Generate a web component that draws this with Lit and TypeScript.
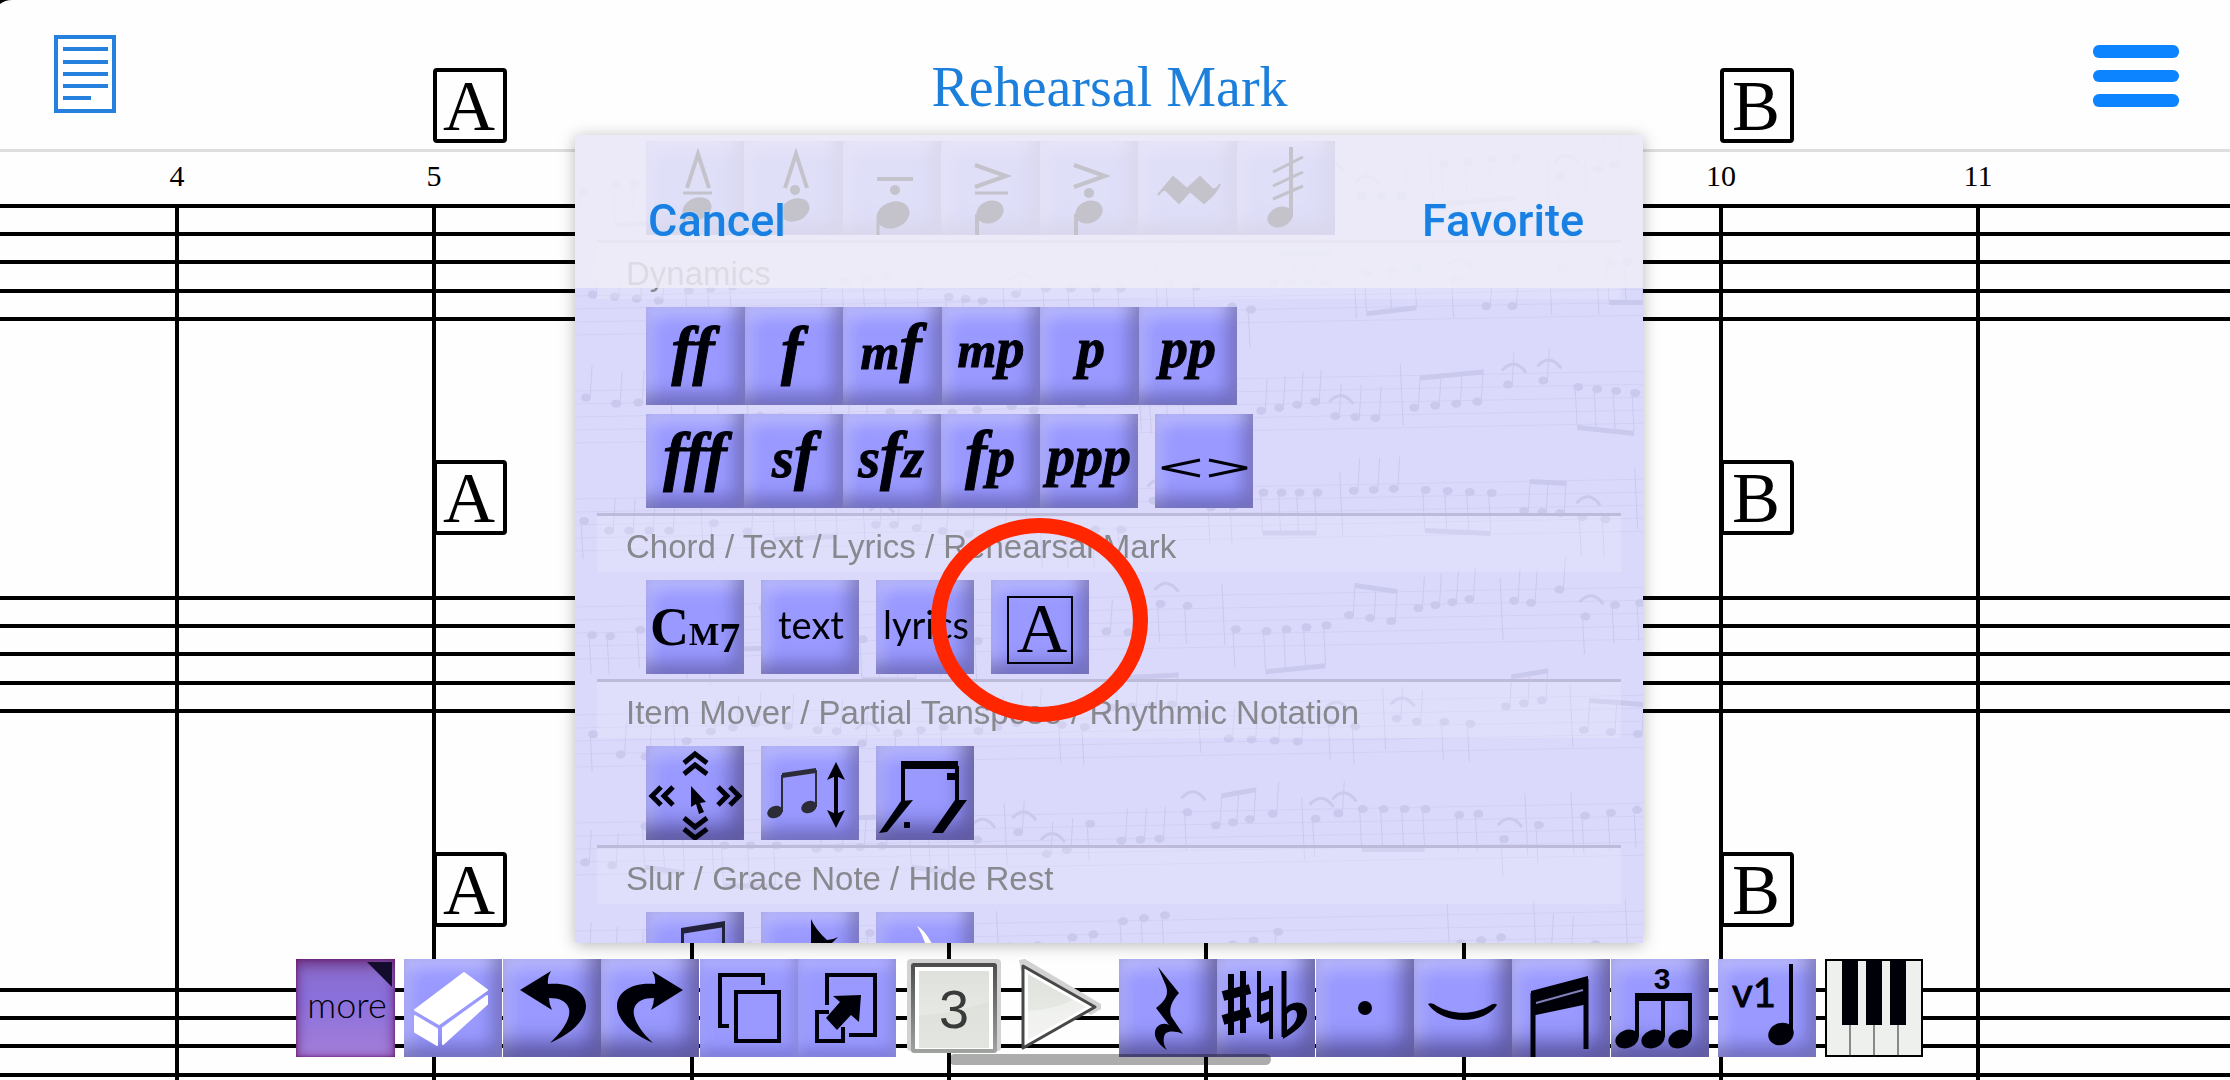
import { LitElement, html, svg, css } from "lit";
import { customElement } from "lit/decorators.js";

type Tile = { label: string; art: unknown; kind?: string };
type Row = { groups: Tile[][]; tall?: boolean };
type Section = { title?: string; rows: Row[] };

/* ---------- glyph helpers ---------- */
const dyn = (text: unknown, y = 60, x = 48) =>
  svg`<text class="dyn" x=${x} y=${y} text-anchor="middle">${text}</text>`;
const head = (x: number, y: number, rx: number, ry: number) =>
  svg`<ellipse cx=${x} cy=${y} rx=${rx} ry=${ry} transform="rotate(-22 ${x} ${y})"/>`;
const line = (d: string, w: number, cap = "butt") =>
  svg`<path d=${d} fill="none" stroke="#000008" stroke-width=${w} stroke-linecap=${cap}/>`;

const accents: Tile[] = [
  { label: "Marcato tenuto", art: svg`${line("M41 47L52 13L63 47", 4)}${line("M37 52H66", 3)}${head(51, 68, 15, 11)}${line("M38 71V98", 3)}` },
  { label: "Marcato staccato", art: svg`${line("M41 47L52 13L63 47", 4)}<circle cx="51" cy="49" r="5"/>${head(51, 69, 15, 11)}${line("M38 71V98", 3)}` },
  { label: "Portato", art: svg`${line("M34 38H70", 4)}<circle cx="52" cy="49" r="5"/>${head(50, 74, 17, 13)}${line("M35 78V98", 3)}` },
  { label: "Accent tenuto", art: svg`${line("M34 24L65 35L34 46", 4)}${line("M34 52H67", 3)}${head(49, 71, 14, 11)}${line("M36 73V98", 4)}` },
  { label: "Accent staccato", art: svg`${line("M34 24L65 35L34 46", 4)}<circle cx="49" cy="52" r="5"/>${head(49, 71, 14, 11)}${line("M36 73V98", 4)}` },
  { label: "Mordent", art: svg`<path d="M20 54L35 36L49 48L62 36L74 48Q78 50 82 43Q78 53 66 62L52 50L41 62L28 49Q24 48 20 54Z" stroke="#000008" stroke-width="2"/>` },
  { label: "Tremolo", art: svg`${line("M54 6V76", 4)}${head(43, 76, 13, 10)}${line("M36 31L66 16M36 45L66 31M36 58L66 45", 3)}` },
];

const dynamicsA: Tile[] = [
  { label: "ff", art: dyn("ff", 65, 47) },
  { label: "f", art: dyn("f", 65, 47) },
  { label: "mf", art: dyn(svg`<tspan class="dyn-m">m</tspan>f`, 62, 48) },
  { label: "mp", art: dyn(svg`<tspan class="dyn-m">m</tspan><tspan class="dyn-p">p</tspan>`, 60, 49) },
  { label: "p", art: dyn(svg`<tspan class="dyn-p">p</tspan>`, 60, 51) },
  { label: "pp", art: dyn(svg`<tspan class="dyn-p">pp</tspan>`, 60, 49) },
];
const dynamicsB: Tile[] = [
  { label: "fff", art: dyn("fff", 64, 49) },
  { label: "sf", art: dyn(svg`<tspan class="dyn-p">s</tspan>f`, 63, 50) },
  { label: "sfz", art: dyn(svg`<tspan class="dyn-p">s</tspan>f<tspan class="dyn-p">z</tspan>`, 63, 48) },
  { label: "fp", art: dyn(svg`f<tspan class="dyn-p">p</tspan>`, 62, 49) },
  { label: "ppp", art: dyn(svg`<tspan class="dyn-p">ppp</tspan>`, 61, 49) },
];
const hairpin: Tile = { label: "Crescendo and diminuendo", art: line("M45 46L7 54L45 62M54 46L92 54L54 62", 3) };

const sections: Section[] = [
  { rows: [{ groups: [accents] }] },
  { title: "Dynamics", rows: [{ groups: [dynamicsA], tall: true }, { groups: [dynamicsB, [hairpin]] }] },
  {
    title: "Chord / Text / Lyrics / Rehearsal Mark",
    rows: [{
      groups: [
        [{ label: "Chord", art: svg`<text class="chord" x="4" y="65">C<tspan class="chord-m">M</tspan><tspan class="chord-7" dy="7">7</tspan></text>` }],
        [{ label: "Text", art: svg`<text class="word" x="50" y="59" text-anchor="middle">text</text>` }],
        [{ label: "Lyrics", art: svg`<text class="word" x="50" y="59" text-anchor="middle">lyrics</text>` }],
        [{ label: "Rehearsal mark", art: svg`<rect x="17" y="17" width="64" height="66" fill="none" stroke="#000008" stroke-width="2"/><text class="boxed" x="51" y="72" text-anchor="middle">A</text>` }],
      ],
    }],
  },
  {
    title: "Item Mover / Partial Tanspose / Rhythmic Notation",
    rows: [{
      groups: [
        [{
          label: "Item mover", kind: "deep",
          art: svg`${line("M38 17L49 8L61 17M38 28L49 19L61 28M38 72L49 81L61 72M38 83L49 92L61 83M15 41L6 50L15 59M27 41L18 50L27 59M72 41L81 50L72 59M84 41L93 50L84 59", 5)}<path d="M45 40L60 56L54 57L58 66L53 68L50 58L45 61Z"/>`,
        }],
        [{
          label: "Partial transpose",
          art: svg`<g fill="#2c2c38">${head(14, 66, 8, 6)}${head(48, 61, 8, 6)}<path d="M21 27L55 22V27L21 32Z"/><rect x="20" y="29" width="2" height="37"/><rect x="54" y="24" width="2" height="37"/></g>${line("M75 28V70", 4)}<path d="M75 16L84 34L75 30L66 34ZM75 82L84 64L75 68L66 64Z"/>`,
        }],
        [{
          label: "Rhythmic notation", kind: "deep",
          art: svg`<path d="M25 15H82V23H25Z"/>${line("M27 20V56M81 20V56", 4)}<path d="M71 27H81V34H71ZM25 55L37 54L11 86L3 87ZM79 54L91 54L67 87L56 87Z"/><rect x="28" y="76" width="6" height="6" rx="1"/>`,
        }],
      ],
    }],
  },
  {
    title: "Slur / Grace Note / Hide Rest",
    rows: [{
      groups: [
        [{ label: "Slur", kind: "deep", art: svg`<g fill="#22223a"><path d="M35 16L79 9V15L35 22Z"/><rect x="35" y="18" width="3" height="60"/><rect x="76" y="11" width="3" height="60"/></g>` }],
        [{ label: "Grace note", art: svg`<path d="M50 7Q54 17 66 28Q72 28 77 25L68 34V60H50Z"/>` }],
        [{ label: "Hide rest", art: svg`<path fill="#fff" d="M41 14Q50 18 60 40L52 44Q50 28 41 14Z"/>` }],
      ],
    }],
  },
];

/* ---------- toolbar artwork ---------- */
const undoPath = "M17 31L48 12Q44 18 45 25C70 23 83 34 83 47C83 60 70 74 47 84C61 71 68 58 66 50C64 42 56 39 46 39Q46 45 49 51Z";
const tool = (label: string, art: unknown, kind = ""): Tile => ({ label, art, kind });

const more = tool("more", svg`<path d="M71 3H96V28Z" fill="#140c2c"/><text class="more-word" x="51" y="59" text-anchor="middle">more</text>`, "more");
const editTools: Tile[][] = [
  [tool("Eraser", svg`<g fill="#fff" stroke="#fff" stroke-width="2" stroke-linejoin="round"><path d="M11 51L60 14L83 31L35 65Z"/><path d="M11 57L33 70V86L11 73Z"/><path d="M39 69L83 37V45L39 85Z"/></g>`)],
  [tool("Undo", svg`<path d=${undoPath}/>`, "deep"), tool("Redo", svg`<path transform="translate(99 0) scale(-1 1)" d=${undoPath}/>`, "deep")],
  [
    tool("Copy", line("M63 26V16H20V67H29M36 33H79V82H36Z", 4), "flat"),
    tool("Paste", svg`${line("M29 46V16H77V76H51M31 53H19V82H45V68", 4)}<path d="M63 36L61 63L53 56L39 71L28 59L42 43L35 37Z"/>`, "flat"),
  ],
];
const gray = svg`<linearGradient id="edge" x1="0" y1="0" x2="0" y2="1"><stop offset="0" stop-color="#4c4c4c"/><stop offset="1" stop-color="#a0a3a0"/></linearGradient>
  <linearGradient id="face" x1="0" y1="0" x2="0" y2="1"><stop offset="0" stop-color="#dfe1dc"/><stop offset="1" stop-color="#eceeea"/></linearGradient>`;
const count = tool("Voice 3", svg`${gray}
  <rect x="2" y="0" width="94" height="92" rx="4" fill="#d2d2d2"/>
  <rect x="6" y="4" width="86" height="90" rx="3" fill="url(#edge)"/>
  <rect x="10" y="8" width="78" height="82" fill="#fff"/>
  <rect x="14" y="12" width="70" height="77" fill="url(#face)"/>
  <path d="M14 57Q50 54 84 43V89H14Z" fill="#d9dcd7" opacity=".5"/>
  <text class="count" x="49" y="69" text-anchor="middle">3</text>`, "bare");
const play = tool("Play", svg`${gray}
  <path d="M7 1L13 0L89 45V50L79 56L9 12Z" fill="#d2d2d2"/>
  <path d="M11 7L83 48L11 89Z" fill="#fff" stroke="#484848" stroke-width="3" stroke-linejoin="round"/>
  <path d="M16 15L74 48L16 81Z" fill="url(#face)"/>
  <path d="M16 52Q44 50 61 41L74 48L16 81Z" fill="#fff" opacity=".4"/>`, "bare");
const noteTools: Tile[][] = [
  [
    tool("Rest", svg`<path d="M39 8L60 34C52 43 50 50 52 57L64 75C54 71 46 72 45 78C44 83 45 87 48 91C40 86 35 79 36 73C37 66 44 63 50 66L37 49C46 42 50 36 47 27Z"/>`, "deep"),
    tool("Accidentals", svg`${line("M14 15V76M26 12V74", 6)}${line("M6 37L33 30M6 61L33 53", 10)}${line("M42 12V63M54 27V80", 4)}${line("M42 39L54 35M42 61L54 56", 8)}${line("M67 12V78", 5)}<path fill-rule="evenodd" d="M66 52C74 40 91 41 90 54C90 64 78 73 66 80ZM70 55V71C76 67 80 62 80 56C80 49 74 50 70 55Z"/>`, "deep"),
  ],
  [
    tool("Dot", svg`<circle cx="49" cy="49" r="7"/>`, "deep"),
    tool("Tie", svg`<path d="M14 45Q18 43 23 47C38 56 60 56 75 47Q81 43 83 46C70 66 28 66 14 45Z"/>`, "deep"),
    tool("Beam", svg`<path d="M19 32L76 17V45L19 57Z"/>${line("M21 34V98M74 20V90", 5)}<path d="M24 44L71 31" stroke="#8080bc" stroke-width="2"/>`, "deep"),
  ],
  [
    tool("Tuplet", svg`<text class="tuplet" x="51" y="30" text-anchor="middle">3</text><path d="M24 34H81V42H24Z"/>${line("M26 36V78M52 36V78M79 36V78", 4)}${head(16, 80, 12, 9)}${head(42, 80, 12, 9)}${head(69, 80, 12, 9)}`, "deep"),
  ],
];
const voice = tool("v1", svg`<text class="voice" x="36" y="48" text-anchor="middle">v1</text>${head(63, 75, 13, 11)}${line("M73 5V76", 4)}`);
const piano = tool("Keyboard", svg`<rect x="1" y="1" width="96" height="96" fill="#eef0ee" stroke="#000" stroke-width="2"/>
  <path d="M17 0H33V66H17ZM41 0H57V66H41ZM65 0H81V66H65Z"/><path d="M25 66V98M49 66V98M73 66V98" stroke="#222" stroke-width="1"/>`, "bare");

/* ---------- score in the background ---------- */
const BARS = Array.from({ length: 8 }, (_, i) => Math.round(175 + i * 257.3));
const NUMBERED = [
  { bar: 0, n: 4 }, { bar: 1, n: 5 }, { bar: 6, n: 10 }, { bar: 7, n: 11 },
];
const SYSTEMS = [204, 596, 988];
const STAFF = [0, 28, 56, 85, 113];
const MARKS = [{ bar: 1, letter: "A" }, { bar: 6, letter: "B" }];

/* Faint handwritten staves that decorate the panel. */
function manuscript() {
  let seed = 11;
  const rnd = () => (seed = (seed * 16807) % 2147483647) / 2147483647;
  const parts: unknown[] = [];
  for (let s = 0; s < 8; s++) {
    const top = 30 + s * 108;
    for (let k = 0; k < 5; k++) {
      const y = top + k * 13;
      parts.push(svg`<path d="M0 ${y + 10}L1080 ${y - 10}" stroke="#8a86b8" stroke-width="1" opacity=".5"/>`);
    }
    let x = 8 + rnd() * 12;
    while (x < 1060) {
      const y = top + 8 - x / 54 + rnd() * 44;
      const up = rnd() > 0.6;
      const n = 1 + Math.floor(rnd() * 4);
      const step = 17 + Math.round(rnd() * 10);
      const slope = Math.round(rnd() * 8 - 4);
      const reach = up ? -32 : 38;
      const edge = up ? 4 : -3;
      for (let i = 0; i < n; i++) {
        const nx = x + i * step;
        const ny = y + i * slope;
        parts.push(svg`<ellipse cx=${nx} cy=${ny} rx="5" ry="4"/><path d="M${nx + edge} ${ny}l2 ${reach}" stroke="#8a86b8" stroke-width="1"/>`);
      }
      if (n > 2 && rnd() > 0.5) {
        const by = y + reach;
        parts.push(svg`<path d="M${x + edge + 2} ${by}l${(n - 1) * step} ${(n - 1) * slope}v5l${-(n - 1) * step} ${-(n - 1) * slope}z"/>`);
      } else if (rnd() > 0.7) {
        parts.push(svg`<path d="M${x - 6} ${y - 14}q12 -14 24 2" fill="none" stroke="#8a86b8" stroke-width="3"/>`);
      }
      x += n * step + 2 + rnd() * 12;
      if (rnd() > 0.75) {
        parts.push(svg`<path d="M${x} ${top - 2 - x / 54}l3 62" stroke="#8a86b8" stroke-width="1"/>`);
        x += 14;
      }
    }
  }
  return svg`${parts}`;
}
const MANUSCRIPT = manuscript();

@customElement("app-root")
export class AppRoot extends LitElement {
  static styles = css`
    :host { display: block; }
    * { box-sizing: border-box; }
    button { border: 0; margin: 0; padding: 0; background: none; font: inherit; color: inherit; cursor: pointer; }
    .stage {
      display: grid; grid-template: minmax(0, 1fr) / minmax(0, 1fr);
      height: 100vh; background: #fefefe; overflow: hidden; position: relative;
    }
    .score, .ui { grid-area: 1 / 1; }
    .score { width: 100%; height: 100%; display: block; }
    .score text { font-family: "Liberation Serif", serif; fill: #000; }
    .number { font-size: 30px; }
    .mark { font-size: 72px; }

    .ui { display: flex; flex-direction: column; align-items: center; padding-bottom: 23px; position: relative; }
    .top {
      align-self: stretch; flex: 0 0 135px; display: grid; grid-template-columns: 1fr auto 1fr;
      align-items: start; padding: 35px 51px 0 54px;
    }
    .title {
      margin: 20px 14px 0 0; font: 400 56px/64px "Liberation Serif", serif; color: #1c7fdc;
    }
    .page-button svg, .menu-button svg { display: block; }
    .page-button { justify-self: start; }
    .menu-button { justify-self: end; margin-top: 10px; }

    .panel-shadow {
      flex: 1 1 0; min-height: 0; display: flex; justify-content: center; align-self: stretch;
      padding-right: 12px;
      filter: drop-shadow(0 2px 8px rgba(0, 0, 0, 0.28));
    }
    .panel {
      flex: 0 1 1068px; min-width: 0; position: relative; overflow: hidden; background: #dad9fb;
    }
    .manuscript { position: absolute; inset: 0; width: 100%; height: 100%; fill: #8a86b8; opacity: 0.2; }
    .panel-bar {
      position: absolute; inset: 0 0 auto 0; height: 153px; padding: 60px 59px 0 73px;
      display: flex; justify-content: space-between; align-items: flex-start;
      background: rgba(239, 238, 246, 0.82);
    }
    .panel-bar button {
      font: 500 45px/52px Roboto, "Liberation Sans", sans-serif; color: #1a7fe2;
      text-shadow: 0 0 2px #bfeaff;
    }
    .list { height: 100%; overflow: hidden auto; scrollbar-width: none; padding: 6px 22px 0; position: relative; }
    .section-title {
      margin: 5px 0 8px; height: 59px; padding: 13px 29px 0; border-top: 3px solid #bdbbd9;
      background: rgba(255, 255, 255, 0.17); font: 400 33px/36px "Liberation Sans", sans-serif;
      color: #88888f; white-space: nowrap;
    }
    .row { display: flex; gap: 17px; padding-left: 49px; height: 94px; }
    .row.tall { height: 98px; margin-bottom: 9px; }
    .group { display: grid; grid-auto-flow: column; grid-auto-columns: 1fr; }

    .tile {
      display: block; overflow: hidden; min-width: 98px; height: 100%; background: #9999ff;
      box-shadow: inset -8px -10px 18px rgba(20, 10, 60, 0.36), inset 0 10px 16px rgba(205, 205, 255, 0.6),
        inset 9px 0 16px rgba(200, 200, 255, 0.35);
    }
    .tile.deep {
      box-shadow: inset -10px -14px 22px rgba(20, 10, 60, 0.5), inset 0 10px 18px rgba(205, 205, 255, 0.65),
        inset 9px 0 16px rgba(200, 200, 255, 0.35);
    }
    .tile.flat {
      box-shadow: inset -4px -8px 14px rgba(30, 20, 90, 0.24), inset 0 8px 16px rgba(205, 205, 255, 0.5);
    }
    .tile.bare { background: none; box-shadow: none; }
    .tile.more {
      min-width: 99px; background: linear-gradient(#8a6cc8, #8a70dc 40%, #a47ed8);
      box-shadow: inset 0 0 3px #6a1060, inset 0 6px 14px rgba(90, 20, 90, 0.6), inset 0 0 8px rgba(110, 20, 130, 0.45);
    }
    .tile svg { display: block; fill: #000008; }
    .dyn { font: italic 700 66px "Liberation Serif", serif; stroke: #000008; stroke-width: 1px; }
    .dyn-m { font-size: 50px; }
    .dyn-p { font-size: 56px; }
    .chord { font: 700 54px "Liberation Serif", serif; }
    .chord-m { font-size: 32px; }
    .chord-7 { font-size: 42px; }
    .word { font: 400 38px Lato, "Liberation Sans", sans-serif; }
    .boxed { font: 400 70px "Liberation Serif", serif; }
    .more-word { font: 300 36px Lato, "Liberation Sans", sans-serif; }
    .count { font: 400 54px "Liberation Sans", sans-serif; fill: #3a3a3a; }
    .tuplet { font: 700 30px "Liberation Sans", sans-serif; }
    .voice { font: 400 40px Lato, "Liberation Sans", sans-serif; stroke: #000008; stroke-width: 1px; }

    .tools { flex: 0 0 98px; margin: 16px 12px 0 0; display: flex; gap: 9px; }
    .cluster { display: flex; gap: 1px; }
    .pair { display: flex; }
    .indicator {
      position: absolute; left: 50%; bottom: 15px; width: 322px; height: 11px; margin-left: -166px;
      border-radius: 6px; background: rgba(0, 0, 0, 0.32);
    }
    .ring {
      position: absolute; left: 356px; top: 383px; width: 217px; height: 204px;
      border: 15px solid #ff2600; border-radius: 50%; pointer-events: none;
    }
  `;

  private tile(t: Tile) {
    return html`<button type="button" class="tile ${t.kind ?? ""}" aria-label=${t.label}>
      <svg width="98" height="98" viewBox="0 0 98 98" aria-hidden="true">${t.art}</svg>
    </button>`;
  }

  private group(tiles: Tile[]) {
    const width = Math.floor(tiles.length * 98.5);
    return html`<div class="group" style="width:${width}px">${tiles.map((t) => this.tile(t))}</div>`;
  }

  private section(s: Section) {
    return html`<section>
      ${s.title ? html`<h2 class="section-title">${s.title}</h2>` : ""}
      ${s.rows.map((r) => html`<div class="row ${r.tall ? "tall" : ""}">${r.groups.map((g) => this.group(g))}</div>`)}
    </section>`;
  }

  private score() {
    return html`<svg class="score" aria-label="Score">
      <rect x="0" y="149" width="100%" height="3" fill="#dedede" />
      ${SYSTEMS.map((y) => STAFF.map((d) => svg`<rect x="0" y=${y + d} width="100%" height="4"/>`))}
      ${BARS.map((x) => svg`<rect x=${x} y="205" width="4" height="100%"/>`)}
      ${NUMBERED.map((m) => svg`<text class="number" x=${BARS[m.bar] + 2} y="186" text-anchor="middle">${m.n}</text>`)}
      ${SYSTEMS.map((y) => MARKS.map((m) => svg`
        <rect x=${BARS[m.bar] + 3} y=${y - 134} width="70" height="71" rx="2" fill="none" stroke="#000" stroke-width="4"/>
        <text class="mark" x=${BARS[m.bar] + 37} y=${y - 74} text-anchor="middle">${m.letter}</text>`))}
      <path d="M0 0H12Q5 0 0 4Z" />
    </svg>`;
  }

  render() {
    return html`<main class="stage">
      ${this.score()}
      <div class="ui">
        <header class="top">
          <button type="button" class="page-button" aria-label="Page view">
            <svg width="62" height="78" viewBox="0 0 62 78">
              <rect x="2" y="2" width="58" height="74" fill="#fff" stroke="#2680de" stroke-width="4" />
              <path d="M9 14H54M9 27H54M9 39H54M9 51H54M9 63H37" stroke="#2680de" stroke-width="4" />
            </svg>
          </button>
          <h1 class="title">Rehearsal Mark</h1>
          <button type="button" class="menu-button" aria-label="Menu">
            <svg width="86" height="62" viewBox="0 0 86 62" fill="#0d84ff">
              <rect y="0" width="86" height="13" rx="6" />
              <rect y="25" width="86" height="12" rx="6" />
              <rect y="49" width="86" height="13" rx="6" />
            </svg>
          </button>
        </header>
        <div class="panel-shadow">
          <div class="panel" role="dialog" aria-label="More symbols">
            <svg class="manuscript" aria-hidden="true">${MANUSCRIPT}</svg>
            <div class="list">${sections.map((s) => this.section(s))}</div>
            <div class="panel-bar">
              <button type="button">Cancel</button>
              <button type="button">Favorite</button>
            </div>
            <div class="ring"></div>
          </div>
        </div>
        <nav class="tools" aria-label="Tools">
          ${this.tile(more)}
          <div class="cluster">${editTools.map((g) => html`<div class="pair">${g.map((t) => this.tile(t))}</div>`)}</div>
          ${this.tile(count)} ${this.tile(play)}
          <div class="cluster">${noteTools.map((g) => html`<div class="pair">${g.map((t) => this.tile(t))}</div>`)}</div>
          ${this.tile(voice)} ${this.tile(piano)}
        </nav>
        <div class="indicator"></div>
      </div>
    </main>`;
  }
}
